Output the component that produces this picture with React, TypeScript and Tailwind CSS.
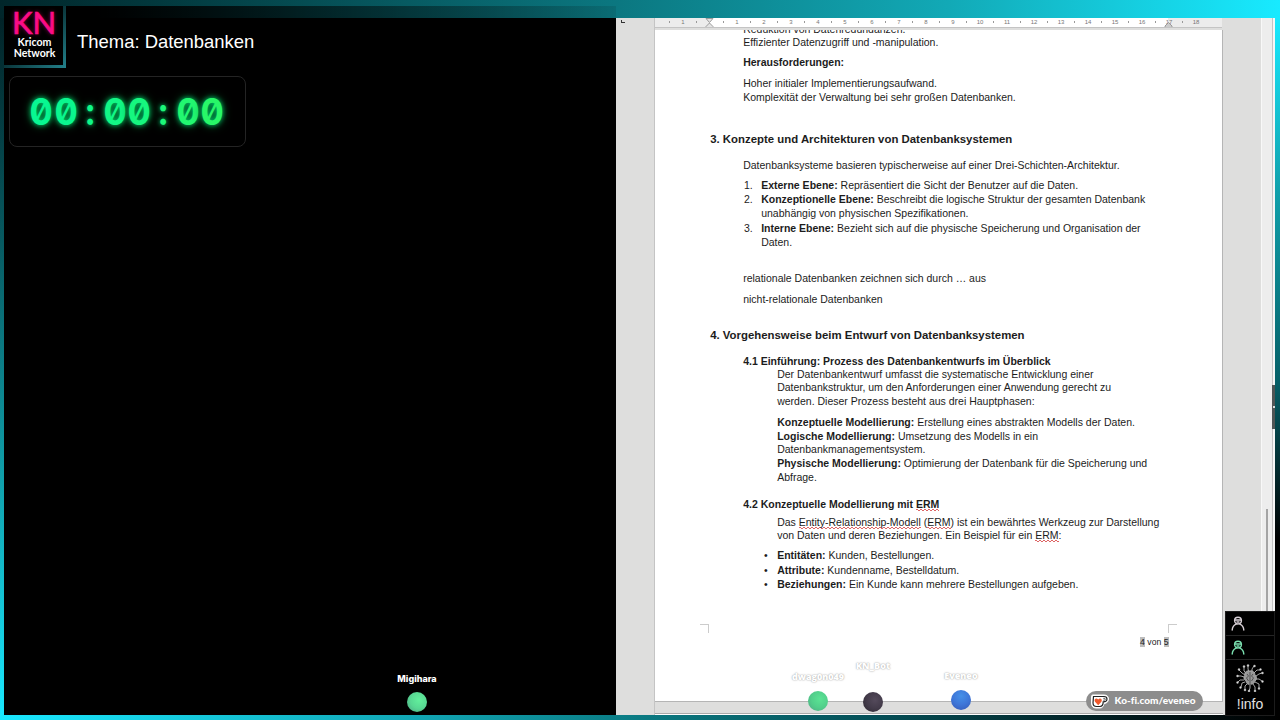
import type { ReactNode } from "react";
import clsx from "clsx";

interface DocLine {
  /** top margin + indent of the line */
  cls: string;
  marker?: string;
  markerCls?: string;
  body: ReactNode;
}

/** Spell checker squiggle: two dashed 1px rows, offset by half a period */
function Misspelled({ children }: { children: ReactNode }) {
  return (
    <span className="bg-[linear-gradient(90deg,#d66_50%,transparent_50%),linear-gradient(90deg,transparent_50%,#d66_50%)] bg-[length:4px_1px] bg-[position:0_calc(100%_-_1px),0_100%] bg-repeat-x pb-px">
      {children}
    </span>
  );
}

const DOC_LINES: DocLine[] = [
  { cls: "-mt-[8px] pl-[88px]", body: "Reduktion von Datenredundanzen." },
  { cls: "-mt-px pl-[88px]", body: "Effizienter Datenzugriff und -manipulation." },
  { cls: "mt-[6px] pl-[88px]", body: <b>Herausforderungen:</b> },
  { cls: "mt-[7px] pl-[88px]", body: "Hoher initialer Implementierungsaufwand." },
  { cls: "pl-[88px]", body: "Komplexität der Verwaltung bei sehr großen Datenbanken." },
  { cls: "mt-[28px] pl-[55px] text-[11.4px]", body: <b>3. Konzepte und Architekturen von Datenbanksystemen</b> },
  { cls: "mt-[12px] pl-[88px]", body: "Datenbanksysteme basieren typischerweise auf einer Drei-Schichten-Architektur." },
  { cls: "mt-[6px] pl-[106px]", marker: "1.", markerCls: "-ml-[17px] w-[17px]", body: <><b>Externe Ebene:</b> Repräsentiert die Sicht der Benutzer auf die Daten.</> },
  { cls: "pl-[106px]", marker: "2.", markerCls: "-ml-[17px] w-[17px]", body: <><b>Konzeptionelle Ebene:</b> Beschreibt die logische Struktur der gesamten Datenbank</> },
  { cls: "pl-[106px]", body: "unabhängig von physischen Spezifikationen." },
  { cls: "mt-px pl-[106px]", marker: "3.", markerCls: "-ml-[17px] w-[17px]", body: <><b>Interne Ebene:</b> Bezieht sich auf die physische Speicherung und Organisation der</> },
  { cls: "pl-[106px]", body: "Daten." },
  { cls: "mt-[22px] pl-[88px]", body: "relationale Datenbanken zeichnen sich durch … aus" },
  { cls: "mt-[7px] pl-[88px]", body: "nicht-relationale Datenbanken" },
  { cls: "mt-[22px] pl-[55px] text-[11.4px]", body: <b>4. Vorgehensweise beim Entwurf von Datenbanksystemen</b> },
  { cls: "mt-[12px] pl-[88px]", body: <b>4.1 Einführung: Prozess des Datenbankentwurfs im Überblick</b> },
  { cls: "-mt-px pl-[122px]", body: "Der Datenbankentwurf umfasst die systematische Entwicklung einer" },
  { cls: "-mt-px pl-[122px]", body: "Datenbankstruktur, um den Anforderungen einer Anwendung gerecht zu" },
  { cls: "pl-[122px]", body: "werden. Dieser Prozess besteht aus drei Hauptphasen:" },
  { cls: "mt-[7px] pl-[122px]", body: <><b>Konzeptuelle Modellierung:</b> Erstellung eines abstrakten Modells der Daten.</> },
  { cls: "pl-[122px]", body: <><b>Logische Modellierung:</b> Umsetzung des Modells in ein</> },
  { cls: "-mt-px pl-[122px]", body: "Datenbankmanagementsystem." },
  { cls: "pl-[122px]", body: <><b>Physische Modellierung:</b> Optimierung der Datenbank für die Speicherung und</> },
  { cls: "pl-[122px]", body: "Abfrage." },
  { cls: "mt-[13px] pl-[88px]", body: <b>4.2 Konzeptuelle Modellierung mit <Misspelled>ERM</Misspelled></b> },
  { cls: "mt-[4px] pl-[122px]", body: <>Das <Misspelled>Entity-Relationship-Modell</Misspelled> (<Misspelled>ERM</Misspelled>) ist ein bewährtes Werkzeug zur Darstellung</> },
  { cls: "-mt-px pl-[122px]", body: <>von Daten und deren Beziehungen. Ein Beispiel für ein <Misspelled>ERM</Misspelled>:</> },
  { cls: "mt-[6px] pl-[122px]", marker: "•", markerCls: "-ml-[13px] w-[13px]", body: <><b>Entitäten:</b> Kunden, Bestellungen.</> },
  { cls: "mt-px pl-[122px]", marker: "•", markerCls: "-ml-[13px] w-[13px]", body: <><b>Attribute:</b> Kundenname, Bestelldatum.</> },
  { cls: "pl-[122px]", marker: "•", markerCls: "-ml-[13px] w-[13px]", body: <><b>Beziehungen:</b> Ein Kunde kann mehrere Bestellungen aufgeben.</> },
];

const RULER_MARKS = ["1", "", ...Array.from({ length: 18 }, (_, i) => String(i + 1))];

function Ruler() {
  return (
    <div className="relative flex h-[10px] w-[567px] shrink-0 overflow-hidden border-b border-[#c4c4c4] bg-[linear-gradient(90deg,#ececec_54px,#fff_54px,#fff_513px,#ececec_513px)] pl-[14px]">
      {RULER_MARKS.map((mark, i) => (
        <div key={i} className="flex h-[8px] w-[27px] shrink-0 items-center text-[6px] leading-[8px] text-[#777]">
          <span className="h-[2px] w-px bg-[#999]" />
          <span className="flex-1 text-center">{mark}</span>
        </div>
      ))}
      <svg className="absolute left-[50px] top-0" width="9" height="10" fill="#e4e4e4" stroke="#888" strokeWidth="0.8">
        <path d="M1 .5h7L4.500 4.500zM4.500 5L8 8.500v1H1v-1z" />
      </svg>
      <svg className="absolute left-[509px] top-0" width="9" height="10" fill="#ccc" stroke="#888" strokeWidth="0.8">
        <path d="M4.500 4.500L8 8v1.500H1V8z" />
      </svg>
    </div>
  );
}

function Page() {
  return (
    <div className="flex h-[672px] w-[568px] shrink-0 flex-col overflow-hidden border-b border-r border-[#b5b5b5] bg-white">
      {DOC_LINES.map((line, i) => (
        <div key={i} className={clsx("flex h-[14px] shrink-0 whitespace-pre leading-[14px]", line.cls)}>
          {line.marker && <span className={clsx("shrink-0", line.markerCls)}>{line.marker}</span>}
          <span className="pl-[0.2px]">{line.body}</span>
        </div>
      ))}
      <div className="mt-[33px] flex shrink-0 justify-between pl-[45px] pr-[45px]">
        <span className="size-[9px] border-r border-t border-[#ccc]" />
        <span className="size-[9px] border-l border-t border-[#ccc]" />
      </div>
      <div className="mt-[4px] flex justify-end gap-[2.500px] pr-[53.500px] text-[8.600px] leading-[10px]">
        <span className="bg-[#bdbdbd]">4</span>
        <span>von</span>
        <span className="bg-[#bdbdbd]">5</span>
      </div>
    </div>
  );
}

function Writer() {
  return (
    <div className="flex w-[659px] shrink-0 overflow-hidden bg-[#dededd] text-[10.500px] text-[#1c1c1c]">
      <div className="w-[39px] shrink-0 border-r border-[#c4c4c4] pl-[5px] pt-[2px]">
        <div className="h-[3px] w-[4px] border-b border-l border-[#333]" />
      </div>
      <div className="flex w-[606px] flex-col">
        <Ruler />
        <div className="h-[2px] shrink-0" />
        <Page />
        <div className="mt-[11px] h-[3px] w-[568px] shrink-0 border-t border-[#aaa] bg-white" />
      </div>
      <div className="w-[11px] border-l border-[#f8f8f8] bg-[#ededed] pl-[4px] pt-[491px]">
        <div className="h-[140px] w-[2px] bg-[#a4a4a4]" />
      </div>
      <div className="flex-1 border-l border-[#c4c4c4] bg-[#f6f6f6] pt-[367px]">
        <div className="-ml-px flex h-[44px] items-center justify-center bg-[#4e5555]">
          <span className="size-[2px] bg-[#d8dcdc]" />
        </div>
      </div>
    </div>
  );
}

const TIMER_CHARS = [
  { ch: "0", cls: "text-[#08f792]" },
  { ch: "0", cls: "text-[#0af78e]" },
  { ch: ":", cls: "text-[#0ff788]" },
  { ch: "0", cls: "text-[#12f785]" },
  { ch: "0", cls: "text-[#16f77f]" },
  { ch: ":", cls: "text-[#1cf778]" },
  { ch: "0", cls: "text-[#22f770]" },
  { ch: "0", cls: "text-[#28f768]" },
];

function Timer() {
  return (
    <div className="ml-[5px] mt-[8px] flex h-[71px] w-[237px] items-center justify-center rounded-[8px] border border-[#242424] pr-px font-['Inter'] text-[37.500px] font-bold leading-none slashed-zero [text-shadow:0_0_5px_#00c869,0_0_10px_#00803c]">
      {TIMER_CHARS.map(({ ch, cls }, i) => (
        <span
          key={i}
          className={clsx("flex w-[24.400px] justify-center", cls, ch === ":" ? "scale-x-90" : "scale-x-[0.92]")}
        >
          {ch}
        </span>
      ))}
    </div>
  );
}

function Logo() {
  return (
    <div className="-mt-[12px] h-[62px] w-[62px] shrink-0 bg-[linear-gradient(135deg,#011a1d_30%,#23818b)] pb-[3px] pr-[3px]">
      <div className="flex h-full flex-col items-center bg-black pt-[2px] font-['Lato'] text-white">
        <div className="pl-px text-[31px] leading-[29px] text-[#fb0c86] [-webkit-text-stroke:0.7px_#fb0c86] [text-shadow:0_0_4px_#a00050]">KN</div>
        <div className="pl-[2px] text-center text-[10.600px] font-bold leading-[10.500px]">
          Kricom
          <br />
          Network
        </div>
      </div>
    </div>
  );
}

function Viewer({ name, nameCls, ballCls, cls }: { name: string; nameCls: string; ballCls: string; cls: string }) {
  return (
    <div className={clsx("absolute flex w-[80px] flex-col items-center", cls)}>
      <span className={clsx("whitespace-nowrap text-[9px] font-extrabold leading-[12px]", nameCls)}>{name}</span>
      <span className={clsx("size-[20px] rounded-full", ballCls)} />
    </div>
  );
}

function PersonIcon({ className }: { className: string }) {
  return (
    <svg className={className} width="14" height="15" viewBox="0 0 14 15" fill="none" stroke="currentColor" strokeWidth="1.4">
      <circle cx="7" cy="4.600" r="3.400" />
      <path d="M4 4h6M5.500 6h3" />
      <path d="M1.200 14c.2-3 2-5 4-5.800M12.800 14c-.2-3-2-5-4-5.800" strokeLinecap="round" />
    </svg>
  );
}

/** Trace end points around the chip-like core, each trace bends once on its way out */
const CIRCUIT_TRACES = [
  "M11 10L8 7V3", "M13 8L12 5V2", "M16 8V5l2-3", "M18 9l3-3h3", "M20 12l3-2 3-1",
  "M20 15h3l3 2", "M19 18l4 2v4", "M17 20l2 3v4", "M14 21v3l-1 3", "M11 20l-2 2v4",
  "M9 18l-3 1-1 4", "M8 16H4l-2 2", "M8 13L5 12H2", "M9 11L6 9 3 6",
];
const CIRCUIT_NODES = [
  [8, 2.5], [12, 1.5], [18.500, 2], [24.500, 5.500], [26.500, 9], [26.500, 17.500], [23, 24.500],
  [19, 27], [13, 27], [9, 26], [4.500, 23.500], [1.500, 18.500], [1.500, 12], [3, 5.500],
];

function CircuitIcon() {
  return (
    <svg width="28" height="28" viewBox="0 0 28 28" fill="none" stroke="#b8b8b8">
      {CIRCUIT_TRACES.map((d) => (
        <path key={d} d={d} strokeWidth="0.9" />
      ))}
      {CIRCUIT_NODES.map(([x, y], i) => (
        <circle key={i} cx={x} cy={y} r="1" fill="#e0e0e0" strokeWidth="0.4" />
      ))}
      <path d="M14 7c-4-1-6 2-5 4-2 2-1 5 1 6 0 3 3 4 4 3 2 1 5-1 5-3 2-1 2-5 0-6 0-3-3-5-5-4z" fill="#999" strokeWidth="0.7" />
      <path d="M14 8v12M11 10l1.500 2-2 2 2 3M17 10l-1.500 2 2 2-2 3" stroke="#333" strokeWidth="0.7" />
    </svg>
  );
}

function InfoPanel() {
  return (
    <div className="absolute left-[1225px] top-[611px] flex h-[105px] w-[50px] flex-col border border-[#1c1c1c] bg-black">
      <div className="h-[24px] border-b border-[#252525] pl-[5px] pt-[4px]">
        <PersonIcon className="text-[#d8d0d6]" />
      </div>
      <div className="h-[24px] border-b border-[#252525] pl-[5px] pt-[4px]">
        <PersonIcon className="text-[#7be0b0]" />
      </div>
      <div className="flex flex-col items-center pt-[4px] text-[14px] leading-[16px] text-[#e2e2e2]">
        <CircuitIcon />
        <span className="mt-[4px]">!info</span>
      </div>
    </div>
  );
}

function KofiBadge() {
  return (
    <div className="absolute left-[1086px] top-[691px] flex h-[20px] w-[117px] items-center gap-[5.500px] rounded-full bg-[#8d8d8d] pl-[5px] font-['Lato'] text-[10px] font-black text-white">
      <svg width="18" height="15" viewBox="0 0 18 15">
        <path d="M2 1h11c3 0 4.500 1.600 4.500 4S15.800 9.500 13 9.500c-.4 3-2 4.500-4 4.500H5c-3 0-4.500-2-4.500-5V2.500C.5 1.500 1 1 2 1z" fill="#fff" stroke="#fff" />
        <path d="M2.500 2.500H13c2 0 3 .9 3 2.500s-1.200 2.800-3.800 2.800c0 3-1.200 4.700-3.200 4.700H5.500c-2.200 0-3.500-1.400-3.500-3.800z" fill="#fff" stroke="#222" strokeWidth="1.200" />
        <path d="M12.300 4.300c1.400 0 2 .2 2 .9s-.7 1-2 1" fill="none" stroke="#222" strokeWidth="0.8" />
        <path d="M7.200 11.200L4 7.800c-1.600-2.600 1.500-4.500 3.200-2.300 1.700-2.200 4.800-.3 3.200 2.300z" fill="#f0592b" />
      </svg>
      <span className="-mt-[2px] tracking-[0.04px]">Ko-fi.com/eveneo</span>
    </div>
  );
}

const GHOST_NAME = "font-['Open_Sans'] text-white [text-shadow:0_0_2px_#aaa,0_0_1px_#bbb]";

export default function App() {
  return (
    <div className="relative flex h-[720px] w-[1280px] flex-col overflow-hidden bg-black font-['Liberation_Sans',Arial,sans-serif]">
      <div className="flex h-[18px] shrink-0 flex-col bg-[linear-gradient(90deg,#01262a,#02383d_12%,#0b7780_48%,#12a9b6_74%,#18eaff)]">
        <div className="ml-[4px] mt-[6px] h-[12px] w-[612px] bg-[linear-gradient(90deg,#000_15%,#00000090_50%,#00000018)]" />
      </div>

      <div className="flex h-[697px] shrink-0">
        <div className="w-[4px] shrink-0 bg-[linear-gradient(180deg,#022327,#075a61_32%,#10a0ab_66%,#19e8ff)]" />
        <div className="w-[612px] shrink-0 bg-black">
          <div className="flex">
            <Logo />
            <h1 className="ml-[11px] mt-[13px] text-[18.450px] leading-[22px] text-white">Thema: Datenbanken</h1>
          </div>
          <Timer />
        </div>
        <Writer />
        <div className="flex-1 bg-[linear-gradient(180deg,#18eaff,#10a0ab_25%,#056068_52%,#000_75%)]" />
      </div>

      <div className="flex-1 bg-[linear-gradient(90deg,#19e8ff,#11a5b3_33%,#0a7a82_50%,#045058_68%,#011a1d_88%,#000)]" />

      <Viewer name="Migihara" cls="left-[377px] top-[673px]" nameCls="mb-[7px] font-['Inter'] text-white" ballCls="bg-[radial-gradient(circle_at_60%_40%,#62ef9c,#58d893_50%,#4aa382)]" />
      <Viewer name="dwag0n049" cls="left-[778px] top-[671px]" nameCls={clsx("mb-[8px]", GHOST_NAME)} ballCls="bg-[radial-gradient(circle_at_60%_40%,#5be394,#52cf8b_50%,#4ea783)]" />
      <Viewer name="KN_Bot" cls="left-[833px] top-[660px]" nameCls={clsx("mb-[20px]", GHOST_NAME)} ballCls="bg-[radial-gradient(circle_at_60%_40%,#544a5b,#433b4a_50%,#29252e)]" />
      <Viewer name="Eveneo" cls="left-[921px] top-[670px]" nameCls={clsx("mb-[8px]", GHOST_NAME)} ballCls="bg-[radial-gradient(circle_at_50%_30%,#4590e8,#3e76d8_50%,#3658b5)]" />

      <KofiBadge />
      <InfoPanel />
    </div>
  );
}
